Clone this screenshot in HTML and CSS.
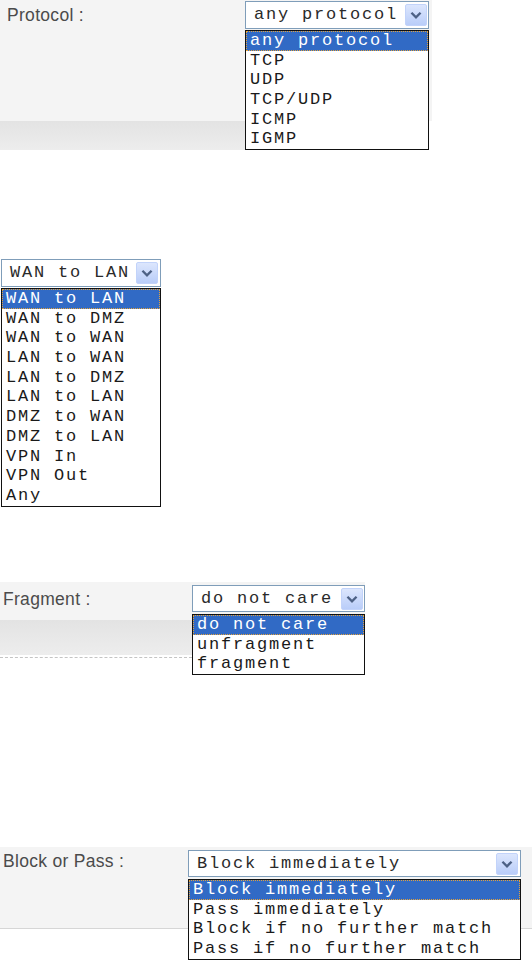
FILE: index.html
```html
<!DOCTYPE html>
<html lang="en">
<head>
<meta charset="utf-8">
<title>Select lists</title>
<link rel="stylesheet" href="styles.css">
</head>
<body>
<div class="page">

  <section class="field field--protocol">
    <div class="label-col">
      <div class="label-area"><span class="label">Protocol :</span></div>
      <div class="band"></div>
    </div>
    <div class="select-col">
      <div class="select">
        <span class="value">any protocol</span>
        <span class="arrow"><svg viewBox="0 0 22 22" width="22" height="22"><path d="M6 8.5 L11 13.5 L16 8.5" fill="none" stroke="#4d6185" stroke-width="2.6"/></svg></span>
      </div>
      <ul class="listbox">
        <li class="selected">any protocol</li>
        <li>TCP</li>
        <li>UDP</li>
        <li>TCP/UDP</li>
        <li>ICMP</li>
        <li>IGMP</li>
      </ul>
    </div>
    <div class="filler"></div>
  </section>

  <section class="field field--direction">
    <div class="select-col">
      <div class="select">
        <span class="value">WAN to LAN</span>
        <span class="arrow"><svg viewBox="0 0 22 22" width="22" height="22"><path d="M6 8.5 L11 13.5 L16 8.5" fill="none" stroke="#4d6185" stroke-width="2.6"/></svg></span>
      </div>
      <ul class="listbox">
        <li class="selected">WAN to LAN</li>
        <li>WAN to DMZ</li>
        <li>WAN to WAN</li>
        <li>LAN to WAN</li>
        <li>LAN to DMZ</li>
        <li>LAN to LAN</li>
        <li>DMZ to WAN</li>
        <li>DMZ to LAN</li>
        <li>VPN In</li>
        <li>VPN Out</li>
        <li>Any</li>
      </ul>
    </div>
  </section>

  <section class="field field--fragment">
    <div class="label-col">
      <div class="label-area"><span class="label">Fragment :</span></div>
      <div class="band"></div>
      <div class="dashes"></div>
    </div>
    <div class="select-col">
      <div class="select">
        <span class="value">do not care</span>
        <span class="arrow"><svg viewBox="0 0 22 22" width="22" height="22"><path d="M6 8.5 L11 13.5 L16 8.5" fill="none" stroke="#4d6185" stroke-width="2.6"/></svg></span>
      </div>
      <ul class="listbox">
        <li class="selected">do not care</li>
        <li>unfragment</li>
        <li>fragment</li>
      </ul>
    </div>
  </section>

  <section class="field field--action">
    <div class="label-col">
      <div class="label-area"><span class="label">Block or Pass :</span></div>
    </div>
    <div class="select-col">
      <div class="select">
        <span class="value">Block immediately</span>
        <span class="arrow"><svg viewBox="0 0 22 22" width="22" height="22"><path d="M6 8.5 L11 13.5 L16 8.5" fill="none" stroke="#4d6185" stroke-width="2.6"/></svg></span>
      </div>
      <ul class="listbox">
        <li class="selected">Block immediately</li>
        <li>Pass immediately</li>
        <li>Block if no further match</li>
        <li>Pass if no further match</li>
      </ul>
    </div>
    <div class="filler"></div>
  </section>

</div>
</body>
</html>
```

FILE: styles.css
```css
html, body {
  margin: 0;
  padding: 0;
  background: #ffffff;
}

.page {
  width: 532px;
  height: 961px;
  overflow: hidden;
  font-family: "Liberation Sans", Arial, sans-serif;
}

.field {
  display: flex;
  align-items: flex-start;
}

.label-col {
  display: flex;
  flex-direction: column;
}

.label-area {
  background: #f4f4f4;
  box-sizing: border-box;
}

.label {
  display: block;
  font-size: 17.5px;
  line-height: 20px;
  letter-spacing: 0.3px;
  color: #4b4b4b;
  white-space: nowrap;
}

.band {
  background: linear-gradient(#e3e3e3, #ededed);
}

.select-col {
  display: flex;
  flex-direction: column;
  box-sizing: border-box;
}

.select {
  display: flex;
  align-items: center;
  box-sizing: border-box;
  border: 1px solid #7f9db9;
  background: #ffffff;
  padding-left: 8px;
}

.value {
  flex: 1;
  font-family: "Liberation Mono", "Courier New", monospace;
  font-size: 17px;
  letter-spacing: 1.8px;
  line-height: 22px;
  color: #2a2a2a;
  white-space: pre;
}

.arrow {
  display: flex;
  width: 22px;
  height: 22px;
  margin-right: 1px;
  border-radius: 2px;
  box-sizing: border-box;
  border: 1px solid #c2d3fa;
  background: linear-gradient(#dce6fd, #b9cdf9);
}

.arrow svg {
  width: 20px;
  height: 20px;
}

.listbox {
  list-style: none;
  margin: 0;
  padding: 0;
  border: 1px solid #111111;
  background: #ffffff;
  box-sizing: border-box;
}

.listbox li {
  font-family: "Liberation Mono", "Courier New", monospace;
  font-size: 17px;
  letter-spacing: 1.8px;
  line-height: 19.7px;
  height: 19.7px;
  padding-left: 4px;
  color: #1a1a1a;
  white-space: pre;
}

.listbox li.selected {
  background: #316ac5;
  color: #ffffff;
  outline: 1px dotted #e3a23c;
  outline-offset: -1px;
}

/* Protocol */
.field--protocol {
  height: 152px;
}
.field--protocol .label-col {
  width: 245px;
}
.field--protocol .label-area {
  height: 121px;
  padding: 5px 0 0 7px;
}
.field--protocol .band {
  height: 29px;
}
.field--protocol .select-col {
  width: 184px;
  padding-top: 1px;
  background: linear-gradient(#f4f4f4 0 121px, transparent 121px);
}
.field--protocol .select {
  height: 28px;
}
.field--protocol .listbox {
  margin-top: 1px;
}
.field--protocol .filler {
  width: 3px;
  height: 121px;
  background: #f4f4f4;
}

/* Direction */
.field--direction {
  margin-top: 107px;
  height: 250px;
  padding-left: 1px;
}
.field--direction .select-col {
  width: 160px;
}
.field--direction .select {
  height: 28px;
}
.field--direction .arrow {
  margin-right: 2px;
}
.field--direction .listbox {
  margin-top: 1px;
}

/* Fragment */
.field--fragment {
  margin-top: 73px;
  height: 94px;
}
.field--fragment .label-col {
  width: 192px;
}
.field--fragment .label-area {
  height: 38px;
  padding: 7px 0 0 3px;
}
.field--fragment .band {
  height: 35px;
}
.field--fragment .dashes {
  height: 0;
  margin-top: 2px;
  border-top: 1px dashed #c4c4c4;
}
.field--fragment .select-col {
  width: 173px;
  padding-top: 3px;
  background: linear-gradient(#f4f4f4 0 38px, transparent 38px);
}
.field--fragment .select {
  height: 27px;
}
.field--fragment .listbox {
  margin-top: 2px;
}

/* Block or Pass */
.field--action {
  margin-top: 171px;
  height: 114px;
}
.field--action .label-col {
  width: 188px;
}
.field--action .label-area {
  height: 82px;
  padding: 4px 0 0 3px;
  border-bottom: 1px solid #d6d6d6;
}
.field--action .select-col {
  width: 333px;
  padding-top: 3px;
  background: linear-gradient(#f4f4f4 0 32px, transparent 32px);
}
.field--action .select {
  height: 27px;
}
.field--action .arrow {
  margin-right: 2px;
}
.field--action .listbox {
  margin-top: 2px;
}
.field--action .filler {
  flex: 1;
  height: 82px;
  box-sizing: border-box;
  background: #f4f4f4;
  border-bottom: 1px solid #d6d6d6;
}
```
